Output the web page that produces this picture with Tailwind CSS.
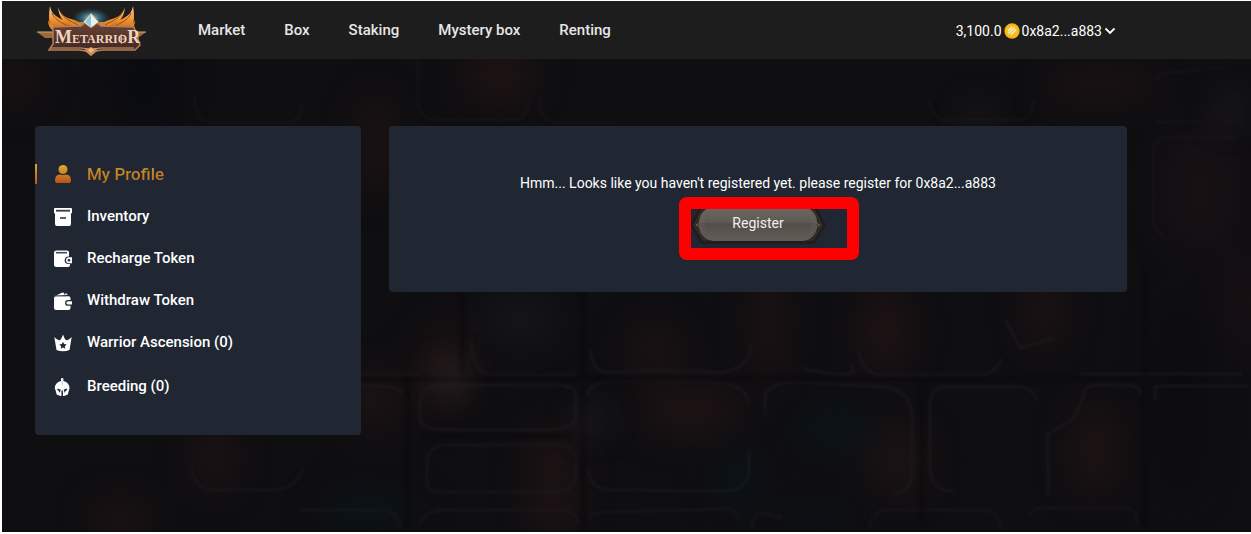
<!DOCTYPE html>
<html lang="en">
<head>
<meta charset="utf-8">
<meta name="viewport" content="width=device-width, initial-scale=1">
<title>Metarrior</title>
<script src="https://cdn.jsdelivr.net/npm/@tailwindcss/browser@4"></script>
</head>
<body class="flex min-h-screen flex-col bg-white pt-px pb-0.5 pl-0.5 font-['Roboto',sans-serif] text-sm text-white">
<header class="flex h-[58px] shrink-0 items-center bg-[#1d1d1d] pr-[135px] pl-[35px]">
  <a href="#" aria-label="Metarrior home" class="shrink-0">
    <svg class="h-[52px] w-[110px]" viewBox="0 0 110 52">
      <defs>
        <linearGradient id="flame" x1="0" y1="0" x2="0" y2="1"><stop offset="0" stop-color="#f8d3a0"/><stop offset=".5" stop-color="#f29a32"/><stop offset="1" stop-color="#c4601a"/></linearGradient>
        <linearGradient id="plate" x1="0" y1="0" x2="0" y2="1"><stop offset="0" stop-color="#6b4436"/><stop offset="1" stop-color="#3a2220"/></linearGradient>
        <radialGradient id="glow"><stop offset="0" stop-color="#c9f4ff"/><stop offset=".4" stop-color="#4fa9c9" stop-opacity=".6"/><stop offset="1" stop-color="#2a6a88" stop-opacity="0"/></radialGradient>
        <g id="wing">
          <path d="M13 2c1 6 4 9 9 12 8 4 16 5 21 12l-22 1c-6-3-9-7-9-13q0-7 1-12z" fill="url(#flame)"/>
          <path d="M21 3c2 7 6 10 13 12 7 2 11 4 13 9l-9 1c-9-4-16-10-17-22z" fill="url(#flame)"/>
          <path d="M11 16c2 4 5 7 11 8l2 3h-7c-4-2-6-6-6-11z" fill="#e08a2c"/>
          <path d="M32 15c4 3 9 3 15 3l2 6-7 1c-5-2-9-5-10-10z" fill="#e98a26"/>
          <path d="M15 9c2 6 8 9 18 14M24 9c3 5 9 8 17 12" fill="none" stroke="#9c4916"/>
        </g>
      </defs>
      <use href="#wing"/>
      <use href="#wing" transform="translate(109 0) scale(-1 1)"/>
      <ellipse cx="54" cy="14" rx="19" ry="10" fill="url(#glow)"/>
      <path d="M0 28h17v6H8zM109 28H92v6h9z" fill="#9b693d"/>
      <path d="M0 28h17M109 28H92" stroke="#d5aa70"/>
      <path d="M16 23l28-1 5-4h10l5 4 33 1 6 18-5 5H66l-7 1-5 4-5-4-7-1H12l4-6z" fill="url(#plate)" stroke="#b57d56" stroke-width="1.500"/>
      <path d="M14 44h30l10 1 10-1h33" fill="none" stroke="#d59b72"/>
      <path d="M46 18l8-9 8 9-8 6z" fill="#e4f1f5" stroke="#c4762f"/>
      <path d="M54 10v13l-6-5z" fill="#8cc9dd"/>
      <path d="M47 46l7-3 7 3-7 6z" fill="#c88b5f"/><path d="M51 46l3-2 3 2-3 3z" fill="#f0bf76"/>
      <text x="18" y="39" fill="#f0d3be" font-family="Liberation Serif, serif" font-weight="700" font-size="12"><tspan font-size="18">M</tspan>ETARRIO<tspan font-size="18">R</tspan></text>
      <path d="M84.500 30v10M82 35h5" stroke="#dca783"/>
    </svg>
  </a>
  <nav class="ml-[51px] flex flex-1 gap-[39px] pt-0.5 text-[15px] font-medium text-[#e6e6e6]">
    <a href="#">Market</a><a href="#">Box</a><a href="#">Staking</a><a href="#">Mystery box</a><a href="#">Renting</a>
  </nav>
  <button type="button" class="flex items-center pt-0.5">
    <span>3,100.0</span>
    <svg class="mx-0.5 size-4" viewBox="0 0 16 16"><circle cx="8" cy="8" r="7.700" fill="#f0b014"/><circle cx="8" cy="8" r="6.500" fill="#f8bd24"/><path d="M4 8l4-4M4.500 10.500l6-6M7 11.500l5-5" stroke="#fff4d8" stroke-width="1.300"/></svg>
    <span>0x8a2...a883</span>
    <svg class="ml-0.5 h-2.5 w-3" viewBox="0 0 12 10" fill="none" stroke="#fff" stroke-width="1.800"><path d="M1.500 2.500L6 7l4.500-4.500"/></svg>
  </button>
</header>
<main class="relative isolate flex-1 overflow-hidden bg-[#0f0e11] pt-[67px] pr-[124px] pb-24 pl-[33px]">
  <svg class="absolute inset-0 -z-10 size-full" viewBox="2 59 1249 473" preserveAspectRatio="xMidYMid slice" aria-hidden="true">
    <defs>
      <filter id="soft" filterUnits="userSpaceOnUse" x="-60" y="0" width="1400" height="600" color-interpolation-filters="sRGB"><feGaussianBlur stdDeviation="17"/></filter>
      <filter id="edge" filterUnits="userSpaceOnUse" x="0" y="50" width="1260" height="490" color-interpolation-filters="sRGB"><feGaussianBlur stdDeviation="1.500"/></filter>
    </defs>
    <g filter="url(#soft)">
      <g fill="#1e1314">
        <ellipse cx="15" cy="80" rx="18" ry="25"/><ellipse cx="375" cy="145" rx="18" ry="50"/><ellipse cx="375" cy="400" rx="25" ry="30"/>
        <ellipse cx="445" cy="370" rx="25" ry="45"/><ellipse cx="553" cy="485" rx="24" ry="60"/><ellipse cx="655" cy="350" rx="25" ry="25"/>
        <ellipse cx="690" cy="410" rx="50" ry="25"/><ellipse cx="768" cy="320" rx="16" ry="60"/><ellipse cx="885" cy="330" rx="25" ry="45"/>
        <ellipse cx="897" cy="460" rx="28" ry="35"/><ellipse cx="1045" cy="310" rx="18" ry="40"/><ellipse cx="1095" cy="450" rx="25" ry="45"/>
        <ellipse cx="215" cy="455" rx="20" ry="35"/><ellipse cx="1100" cy="85" rx="55" ry="15"/><ellipse cx="1200" cy="190" rx="40" ry="60" fill="#171114"/><ellipse cx="500" cy="75" rx="35" ry="30"/>
        <ellipse cx="1245" cy="300" rx="20" ry="50" fill="#181014"/><ellipse cx="120" cy="520" rx="30" ry="20"/>
      </g>
      <g fill="#0b1317">
        <ellipse cx="145" cy="85" rx="30" ry="35" fill="#090b11"/><ellipse cx="835" cy="430" rx="40" ry="28"/><ellipse cx="370" cy="510" rx="50" ry="22"/>
        <ellipse cx="740" cy="480" rx="25" ry="35"/><ellipse cx="820" cy="520" rx="35" ry="15"/><ellipse cx="520" cy="320" rx="35" ry="22" fill="#17171b"/><ellipse cx="1180" cy="400" rx="25" ry="100" fill="#0c0b10"/>
      </g>
    </g>
    <g fill="none" stroke="#1b1a1e" stroke-width="2" filter="url(#edge)">
      <path d="M195 95v10q2 17 17 18h75q14-2 15-18M418 60v40q2 20 17 20h80q12-2 14-20M540 95v10q2 17 17 18h60M930 100q2 18 14 20h75q14-2 15-20" stroke-opacity=".6"/>
      <path d="M1155 80q2-5 12-7l60-6M1155 122h45M1153 220v-68q2-15 14-15h70M1153 220q2 12 12 17" stroke-opacity=".6"/>
      <path d="M360 375h60M471 342q4 32 20 33h85M590 350q4 24 18 23 55-5 112 0 30-4 31-28M803 368q30 7 45 7 8-2 3-12M859 350q2 22 20 25h101q17-1 21-17M1005 320l16 28 34-10M1080 374h162"/>
      <path d="M360 386q32-2 41 6 6 2 6 13M420 400q2-13 20-15h120q15 0 16 12v22q-2 8-25 11h-110q-18-1-21-10zM586 398q5-17 25-17h90q44 0 48 22M749 450v23q-2 15-20 18l-118-1q-20 0-23-20M765 415v-20q7-15 35-13l85 5q26 3 27 30v60q-2 15-18 17M930 470V402q2-15 15-15h70q18-1 22 13M930 470q2 22 25 21M1048 495V434l25-15 10-20q0-14 15-14h30q12 0 13 10M1155 400v-14h94"/>
      <path d="M427 488v-30q3-12 20-13h110q18 0 19 14v19q-2 12-18 14H445q-15 0-18-4M420 525q3-13 20-15h120q17 0 19 14M588 519q2-7 18-7l120-3q12 0 12 12M752 530q0-15 10-17l20 5M869 530q2-18 17-20h95q19 0 20 20M1030 515q2-8 20-7h75q12 0 12 16M300 510h88q10 5 12 18M190 465q5 23 19 25h70q20-5 24-24" stroke-opacity=".8"/>
    </g>
    <g stroke="#0b0a0d" stroke-width="6" stroke-opacity=".6" filter="url(#edge)"><path d="M462 291v82M583 291v240M360 379h840M407 378v150M922 380v145M1145 270v260M179 60v65M420 436h155" fill="none"/></g>
    <g filter="url(#soft)" fill="#3a3535"><circle cx="450" cy="378" r="11"/><circle cx="1230" cy="110" r="10"/><circle cx="977" cy="116" r="8"/><circle cx="592" cy="419" r="10"/></g>
  </svg>
  <div class="grid grid-cols-[326px_minmax(0,1fr)] items-start gap-7">
    <nav aria-label="Account" class="rounded bg-[#202733] pt-[27px] pb-[28px] text-[15px] font-medium">
      <a href="#" aria-current="page" class="flex h-[42px] items-center text-[17px]">
        <span class="h-5 w-0.5 bg-linear-to-b from-[#d8a72c] to-[#b65b20]"></span>
        <svg class="mr-[15px] ml-[17px] size-[18px]" viewBox="0 0 18 18"><defs><linearGradient id="gold" x1="0" y1="0" x2="0" y2="18" gradientUnits="userSpaceOnUse"><stop stop-color="#dbad2c"/><stop offset="1" stop-color="#b9531c"/></linearGradient></defs><circle cx="9" cy="4.500" r="4.500" fill="url(#gold)"/><path d="M1 15.500q0-6 5-6 3 1.200 6 0 5 0 5 6 0 2.500-2 2.500H3q-2 0-2-2.500z" fill="url(#gold)"/></svg>
        <span class="bg-linear-to-b from-[#cf9e2b] to-[#b9671f] bg-clip-text text-transparent">My Profile</span>
      </a>
      <a href="#" class="flex h-[42px] items-center pt-0.5 pl-[19px]">
        <svg class="mr-[15px] size-[18px]" viewBox="0 0 18 18"><rect width="18" height="5.500" rx="1" fill="#fff"/><path d="M2 2.700h14" stroke="#333a48" stroke-width="1.800"/><path d="M1 5h16v11q0 2-2 2H3q-2 0-2-2z" fill="#fff"/><path d="M6 10h6" stroke="#202733" stroke-width="1.500"/></svg>
        Inventory
      </a>
      <a href="#" class="flex h-[42px] items-center pt-0.5 pl-[19px]">
        <svg class="mr-[15px] size-[18px]" viewBox="0 0 18 18"><path d="M2.500.5H13q2 0 2 2v4h-.500a3.800 3.800 0 0 0 0 7.600H16V15q0 2-2 2H2.500Q0 17 0 15V2.500Q0 .5 2.500.5z" fill="#fff"/><path d="M2 2.700h11" stroke="#444b58" stroke-width="1.600"/><path d="M15 7.300h3.500v6H15a3 3 0 0 1 0-6z" fill="#fff"/><circle cx="15" cy="10.300" r="1.300" fill="#202733"/></svg>
        Recharge Token
      </a>
      <a href="#" class="flex h-[42px] items-center pt-0.5 pl-[19px]">
        <svg class="mr-[15px] size-[18px]" viewBox="0 0 18 18"><path d="M2 3.500L8 .7q1.500-.6 2.200 1L11 3z" fill="#fff"/><path d="M11 1.200l2 .5.500 1.300h-2z" fill="#fff"/><path d="M2 4.300h12.500q2 0 2 2V8H14a2.900 2.900 0 0 0 0 5.800h2.500V16q0 2-2 2H2q-2 0-2-2V6q0-1.700 2-1.700z" fill="#fff"/><path d="M14 9.300h4v3.200h-4a1.600 1.600 0 0 1 0-3.200z" fill="#fff"/><path d="M1 3.900h11" stroke="#626773" stroke-width=".8"/></svg>
        Withdraw Token
      </a>
      <a href="#" class="flex h-[42px] items-center pt-0.5 pl-[19px]">
        <svg class="mr-[15px] size-[18px]" viewBox="0 0 18 18"><path d="M.3 3Q4.500 7 6.200 6 7.500 5 9 .5 10.500 5 11.800 6q1.700 1 5.900-3L15.500 16q-6.500 2.500-13 0z" fill="#fff"/><path d="M9 7.700l1.100 2.400 2.600.3-1.900 1.800.5 2.500L9 13.500l-2.300 1.200.5-2.500-1.900-1.800 2.600-.3z" fill="#202733"/></svg>
        Warrior Ascension (0)
      </a>
      <a href="#" class="mt-0.5 flex h-[42px] items-center pt-0.5 pl-[19px]">
        <svg class="mr-[15px] size-[18px]" viewBox="0 0 18 18"><path d="M7 3V1q0-1 1.200-1t1.200 1v2q6.300 1.500 6.100 7.500L15 12l-1.200 4.500L10 18H6.500l-3.800-1.500L1.500 12 .8 10.500Q.7 4.500 7 3z" fill="#fff"/><path d="M8.200 18v-5.500M3.500 11.200l3 1.300M12.900 11.200l-3 1.300" stroke="#202733" stroke-width="1.500"/><path d="M4 11.500l2.300 1.300-.6 2.200zM12.400 11.500l-2.300 1.300.6 2.200z" fill="#202733"/><path d="M8.200 2.500V7" stroke="#aab0b8" stroke-width=".8"/></svg>
        Breeding (0)
      </a>
    </nav>
    <section class="flex flex-col items-center rounded bg-[#202733] px-4 pt-[47px] pb-[46px]">
      <p class="text-center leading-5">Hmm... Looks like you haven't registered yet. please register for 0x8a2...a883</p>
      <div class="relative mt-[13px]">
        <button type="button" class="relative flex h-10 w-[136px] items-center justify-center pb-1.5">
          <svg class="absolute inset-0 size-full" viewBox="0 0 136 40" aria-hidden="true">
            <defs><linearGradient id="metal" x1="0" y1="0" x2="0" y2="1"><stop offset="0" stop-color="#6d6660"/><stop offset=".45" stop-color="#5f5954"/><stop offset=".5" stop-color="#534d49"/><stop offset="1" stop-color="#645c56"/></linearGradient></defs>
            <path d="M0 19L10 0h116l10 19-11 19H11z" fill="#211d1c"/>
            <path d="M4 19l8-15h112l8 15-9 15H13z" fill="#2c2725" stroke="#3d3631"/>
            <rect x="9" y="1" width="118" height="34" rx="15" fill="url(#metal)"/>
            <path d="M6 19l9-8M6 19l9-4M6 19h9M6 19l9 4M6 19l9 8M130 19l-9-8M130 19l-9-4M130 19h-9M130 19l-9 4M130 19l-9 8" stroke="#857c74" stroke-opacity=".35"/>
          </svg>
          <span class="relative text-[#f0f0f0]">Register</span>
        </button>
        <div class="pointer-events-none absolute -top-[9px] -left-[11px] h-[63px] w-[180px] rounded-lg border-[12px] border-[#ff0000]"></div>
      </div>
    </section>
  </div>
</main>
</body>
</html>
